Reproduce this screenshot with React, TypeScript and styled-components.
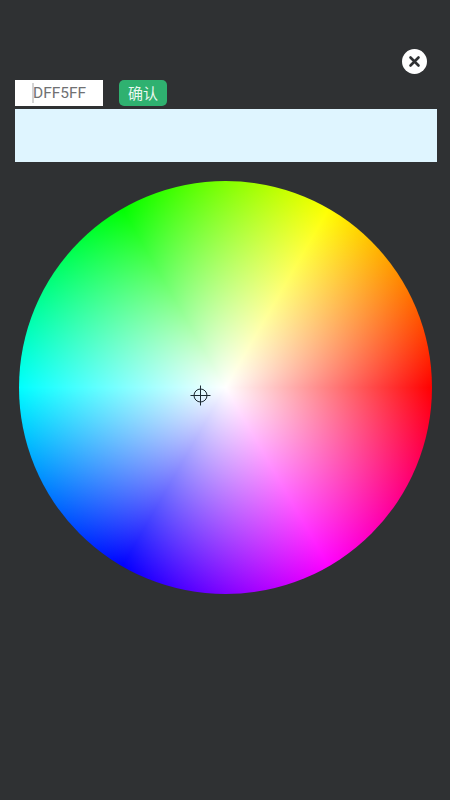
import React from 'react';
import styled, { createGlobalStyle } from 'styled-components';

const GlobalStyle = createGlobalStyle`
  html, body {
    margin: 0;
    padding: 0;
    background: #2f3133;
  }
`;

const Page = styled.div`
  width: 450px;
  height: 800px;
  box-sizing: border-box;
  padding: 49px 13px 0 15px;
  background: #2f3133;
  font-family: "Roboto", "Noto Sans CJK SC", sans-serif;
  overflow: hidden;
`;

const CloseRow = styled.div`
  display: flex;
  justify-content: flex-end;
  height: 25px;
  padding-right: 10px;
  margin-bottom: 6px;
`;

const CloseButton = styled.button`
  width: 25px;
  height: 25px;
  padding: 0;
  border: none;
  border-radius: 50%;
  background: #fff;
  display: flex;
  align-items: center;
  justify-content: center;
`;

const InputRow = styled.div`
  display: flex;
  align-items: stretch;
  gap: 16px;
  height: 26px;
  margin-bottom: 3px;
`;

const HexField = styled.div`
  width: 88px;
  box-sizing: border-box;
  padding-left: 18px;
  background: #fff;
  color: #707173;
  font-size: 15.5px;
  line-height: 26px;
  position: relative;
`;

const Caret = styled.span`
  position: absolute;
  left: 17px;
  top: 3px;
  width: 2px;
  height: 20px;
  background: #d4d4d4;
`;

const ConfirmButton = styled.button`
  width: 48px;
  padding: 0;
  border: none;
  border-radius: 5px;
  background: #2fb170;
  color: #e9f7ef;
  font-family: "Noto Sans CJK SC", sans-serif;
  font-size: 15px;
  line-height: 26px;
`;

const Preview = styled.div<{ $color: string }>`
  height: 53px;
  background: ${(p) => p.$color};
  margin-bottom: 18.5px;
`;

const WheelArea = styled.div`
  display: flex;
  justify-content: center;
  margin-left: -15px;
  margin-right: -13px;
`;

const Wheel = styled.div`
  position: relative;
  width: 413px;
  height: 413px;
  border-radius: 50%;
  background:
    radial-gradient(circle closest-side, #fff 0%, rgba(255, 255, 255, 0) 100%),
    conic-gradient(
      from 90deg,
      #f00 0deg,
      #f0f 60deg,
      #00f 120deg,
      #0ff 180deg,
      #0f0 240deg,
      #ff0 300deg,
      #f00 360deg
    );
`;

const Crosshair = styled.svg`
  position: absolute;
  left: 171.5px;
  top: 204.5px;
  width: 21px;
  height: 21px;
`;

export default function App() {
  return (
    <Page>
      <GlobalStyle />
      <CloseRow>
        <CloseButton aria-label="close">
          <svg width="13" height="13" viewBox="0 0 13 13">
            <path d="M2.5 2.5 L10.5 10.5 M10.5 2.5 L2.5 10.5" stroke="#2f3133" strokeWidth="2.6" strokeLinecap="round" />
          </svg>
        </CloseButton>
      </CloseRow>
      <InputRow>
        <HexField>
          <Caret />
          DFF5FF
        </HexField>
        <ConfirmButton>确认</ConfirmButton>
      </InputRow>
      <Preview $color="#dff5ff" />
      <WheelArea>
        <Wheel>
          <Crosshair viewBox="0 0 21 21">
            <circle cx="10.5" cy="10.5" r="6.5" fill="none" stroke="#1c2a33" strokeWidth="1" />
            <path d="M10.5 0.5 V20.5 M0.5 10.5 H20.5" stroke="#1c2a33" strokeWidth="1" />
          </Crosshair>
        </Wheel>
      </WheelArea>
    </Page>
  );
}
